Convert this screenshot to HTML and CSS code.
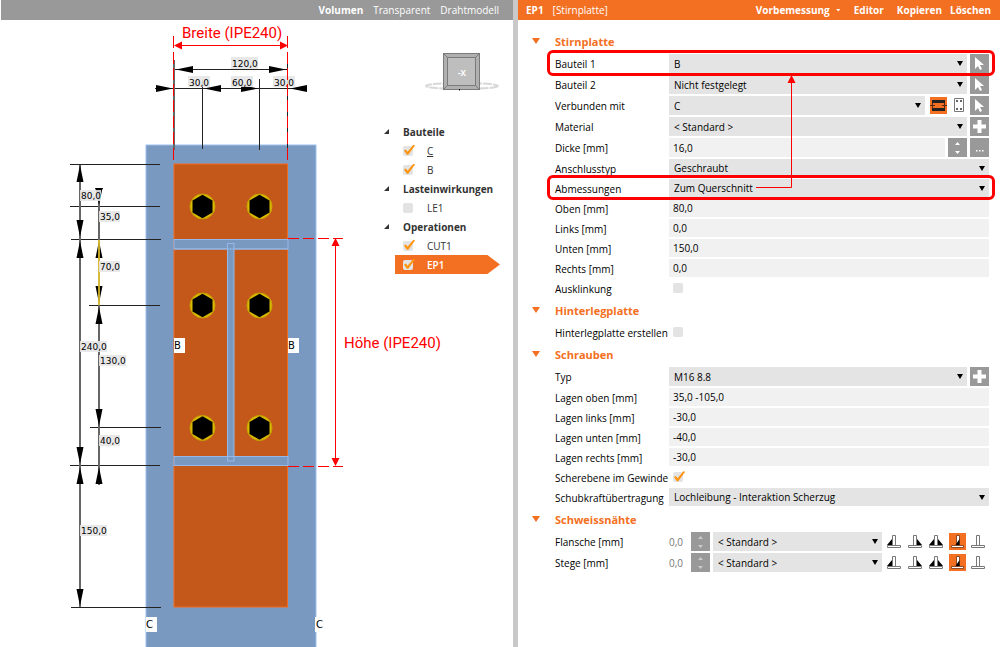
FILE: index.html
```html
<!DOCTYPE html>
<html lang="de">
<head>
<meta charset="utf-8">
<title>Stirnplatte</title>
<link rel="stylesheet" href="styles.css">
</head>
<body>
<svg class="defs" aria-hidden="true">
  <defs>
    <symbol id="cursor" viewBox="0 0 19 19"><path fill="#fff" d="M5 3v12l3-3 2 4 2-1-2-4h4z"/></symbol>
    <symbol id="plus" viewBox="0 0 19 19"><path fill="#fff" d="M7.500 3h4v4.500H16v4h-4.500V16h-4v-4.500H3v-4h4.500z"/></symbol>
    <symbol id="spin" viewBox="0 0 19 19"><path fill="currentColor" d="M7 7l2.500-3L12 7zM7 13l2.500 3L12 13z"/></symbol>
    <symbol id="dots" viewBox="0 0 19 19"><path fill="#fff" d="M6 12h1.500v1.500H6zM9 12h1.500v1.500H9zM12 12h1.500v1.500H12z"/></symbol>
    <symbol id="tee" viewBox="0 0 17 17"><path fill="#fff" stroke="#777" d="M1.500 12.500h13v2h-13zM6.500 2.500h3v10h-3z"/></symbol>
    <symbol id="weld-left" viewBox="0 0 17 17"><use href="#tee"/><path d="M6 6v6H1z"/></symbol>
    <symbol id="weld-right" viewBox="0 0 17 17"><use href="#tee"/><path d="M10 6v6h5z"/></symbol>
    <symbol id="weld-both" viewBox="0 0 17 17"><use href="#tee"/><path d="M6 6v6H1zM10 6v6h5z"/></symbol>
    <symbol id="weld-butt" viewBox="0 0 17 17"><path fill="#fff" stroke="#8a4a25" d="M2.500 12.500h12v2h-12zM7.500 2.500h3v10h-3z"/><path d="M10.500 6v6H6.500z"/></symbol>
    <g id="bolt"><circle r="12.500" fill="#dcb800" stroke="#c4a200"/><path d="M0-11.800 10-6v12L0 11.800-10 6v-12z"/></g>
    <path id="up" d="M0 0 3.500 17h-7z"/>
    <path id="down" d="M0 0 3.500-17h-7z"/>
    <path id="left" d="M0 0 17-3.500v7z"/>
    <path id="right" d="M0 0-17-3.500v7z"/>
  </defs>
</svg>
<div class="app">
  <section class="viewer">
    <header class="bar bar-view">
      <button class="active">Volumen</button>
      <button>Transparent</button>
      <button>Drahtmodell</button>
    </header>
    <div class="scene">
      <svg class="drawing" viewBox="0 20 513 627" preserveAspectRatio="xMinYMin slice">
        <rect x="146" y="145" width="170" height="520" fill="#7a99c1" stroke="#9cc0ee"/>
        <rect x="174" y="164" width="113.500" height="443" fill="#c4581b" stroke="#f26a1f"/>
        <g fill="#7a99c1" stroke="#94b8ea">
          <rect x="174" y="239.500" width="114" height="9.500"/>
          <rect x="174" y="456.500" width="114" height="9"/>
          <rect x="227.500" y="243.500" width="6.500" height="217.500"/>
        </g>
        <path stroke="#94b8ea" d="M174 249h114M174 456.500h114"/>
        <use href="#bolt" x="202.500" y="206.500"/><use href="#bolt" x="259.500" y="206.500"/>
        <use href="#bolt" x="202.500" y="305.500"/><use href="#bolt" x="259.500" y="305.500"/>
        <use href="#bolt" x="202.500" y="428" /><use href="#bolt" x="259.500" y="428"/>
        <g class="dim-lines">
          <path d="M70 164.500h90M70 206.500h90M71 239.500h90M89 305.500h71M90 427.500h71M70 465.500h90M71 607.500h90"/>
          <path d="M174 69.500h114M155 88.500h152M202.500 80v69M259.500 79v71M287.500 60v90"/>
          <path class="soft" d="M80 165v442M99 189v296M174 60v90"/>
        </g>
        <use href="#left" x="176" y="69.500"/><use href="#right" x="286" y="69.500"/>
        <use href="#right" x="173" y="88.500"/><use href="#left" x="204" y="88.500"/><use href="#right" x="258" y="88.500"/><use href="#left" x="290" y="88.500"/>
        <use href="#up" x="80" y="165"/><use href="#down" x="80" y="237"/><use href="#up" x="80" y="241"/><use href="#down" x="80" y="464"/><use href="#up" x="80" y="467"/><use href="#down" x="80" y="606"/>
        <use href="#down" x="99" y="205"/><use href="#up" x="99" y="241"/><use href="#down" x="99" y="303"/><use href="#up" x="99" y="307"/><use href="#down" x="99" y="426"/><use href="#up" x="99" y="467"/>
        <path stroke="#ffd92e" stroke-width="1.500" d="M99 240v65"/>
        <g class="dim-box">
          <path d="M231 57h27v12h-27zM188 76h22v11h-22zM231 76h22v11h-22zM273 76h22v11h-22zM80 190h21v11h-21zM99 211h21v11h-21zM99 261h21v11h-21zM80 341h27v11h-27zM99 355h27v11h-27zM99 435h21v11h-21zM80 525h27v11h-27z"/>
        </g>
        <path d="M95 188h8l-1 2h-6z"/>
        <g class="dim-text">
          <text x="232" y="67">120,0</text><text x="189" y="86">30,0</text><text x="232" y="86">60,0</text><text x="274" y="86">30,0</text>
          <text x="81" y="199">80,0</text><text x="100" y="220">35,0</text><text x="100" y="270">70,0</text><text x="81" y="350">240,0</text><text x="100" y="364">130,0</text><text x="100" y="444">40,0</text><text x="81" y="534">150,0</text>
        </g>
        <path fill="#fff" d="M174 338h11v15h-11zM288 338h11v15h-11zM146 617h11v15h-11zM315 617h11v15h-11z"/>
        <g class="tag-text"><text x="174" y="349">B</text><text x="288" y="349">B</text><text x="146" y="628">C</text><text x="316" y="628">C</text></g>
        <g fill="none" stroke="#f00">
          <path stroke-dasharray="12 4" d="M173.500 36v128M287.500 36v128"/>
          <path stroke-dasharray="11 4" d="M288 238.500h55M288 466.500h55"/>
          <path d="M175 45.500h112M335.500 240v225"/>
        </g>
        <path fill="#f00" d="M174 45.500l8-4v8zM288 45.500l-8-4v8zM335.500 238l4 8h-8zM335.500 466l4-8h-8z"/>
        <g class="note-text"><text x="182" y="38">Breite (IPE240)</text><text x="344" y="348">Höhe (IPE240)</text></g>
      </svg>
      <aside class="side">
        <svg class="cube" width="76" height="42" viewBox="0 0 76 42">
          <ellipse cx="38" cy="34" rx="36" ry="3" fill="none" stroke="#d8d8d8" stroke-width="2" stroke-dasharray="9 1"/>
          <rect x="19.500" y="1.500" width="36" height="36" fill="#b0b0b0" stroke="#7a7a7a"/>
          <path stroke="#7a7a7a" fill="none" d="M19.500 1.500l36 36M55.500 1.500l-36 36"/>
          <rect x="23.500" y="5.500" width="28" height="28" fill="#bebebe" stroke="#7a7a7a"/>
          <path d="M35 37h1v1.500h-1z"/>
          <text x="34" y="24">-X</text>
        </svg>
        <div class="tree">
          <h2>Bauteile</h2>
          <label><input type="checkbox" checked><span class="current">C</span></label>
          <label><input type="checkbox" checked><span>B</span></label>
          <h2>Lasteinwirkungen</h2>
          <label><input type="checkbox"><span>LE1</span></label>
          <h2>Operationen</h2>
          <label><input type="checkbox" checked><span>CUT1</span></label>
          <label class="selected"><input type="checkbox" checked><span>EP1</span></label>
        </div>
      </aside>
    </div>
  </section>
  <div class="splitter"></div>
  <section class="panel">
    <header class="bar bar-props">
      <b>EP1</b><span class="kind">[Stirnplatte]</span>
      <button class="menu">Vorbemessung</button>
      <button>Editor</button>
      <button>Kopieren</button>
      <button>Löschen</button>
    </header>
    <form class="props">
      <h2>Stirnplatte</h2>
      <div class="row tall marked"><label for="b1">Bauteil 1</label><span class="select"><select id="b1"><option>B</option></select></span><button type="button" class="tool" aria-label="Auswählen"><svg><use href="#cursor"/></svg></button></div>
      <div class="row tall"><label for="b2">Bauteil 2</label><span class="select"><select id="b2"><option>Nicht festgelegt</option></select></span><button type="button" class="tool" aria-label="Auswählen"><svg><use href="#cursor"/></svg></button></div>
      <div class="row tall"><label for="vm">Verbunden mit</label><span class="select"><select id="vm"><option>C</option></select></span>
        <div class="choices sides">
          <button type="button" class="choice on" aria-label="Flansch"><svg viewBox="0 0 17 17"><path fill="#222" d="M2 3h13v3H2zM2 11h13v3H2z"/><path fill="none" stroke="#5a2a10" d="M2.500 6v5M14.500 6v5M0 8.500h5M12 8.500h5"/></svg></button>
          <button type="button" class="choice" aria-label="Umfang"><svg viewBox="0 0 17 17"><path fill="none" stroke="#777" d="M4.500 1.500h9v13h-9z"/><path d="M6 3h2v2H6zM10 3h2v2h-2zM6 11h2v2H6zM10 11h2v2h-2z" fill="#666"/></svg></button>
        </div>
        <button type="button" class="tool" aria-label="Auswählen"><svg><use href="#cursor"/></svg></button></div>
      <div class="row tall"><label for="mat">Material</label><span class="select"><select id="mat"><option>&lt; Standard &gt;</option></select></span><button type="button" class="tool" aria-label="Neu"><svg><use href="#plus"/></svg></button></div>
      <div class="row tall"><label for="di">Dicke [mm]</label><input class="text" id="di" value="16,0"><button type="button" class="tool" aria-label="Ändern"><svg><use href="#spin"/></svg></button><button type="button" class="tool" aria-label="Mehr"><svg><use href="#dots"/></svg></button></div>
      <div class="row"><label for="at">Anschlusstyp</label><span class="select"><select id="at"><option>Geschraubt</option></select></span></div>
      <div class="row marked"><label for="ab">Abmessungen</label><span class="select"><select id="ab"><option>Zum Querschnitt</option></select></span>
        <svg class="link-arrow" width="42" height="115" viewBox="0 0 42 115"><path fill="none" stroke="#f00" d="M0 112.500h35.500V6"/><path fill="#f00" d="M35.500 0l4 8h-8z"/></svg></div>
      <div class="row"><label for="ob">Oben [mm]</label><input class="text" id="ob" value="80,0"></div>
      <div class="row"><label for="li">Links [mm]</label><input class="text" id="li" value="0,0"></div>
      <div class="row"><label for="un">Unten [mm]</label><input class="text" id="un" value="150,0"></div>
      <div class="row"><label for="re">Rechts [mm]</label><input class="text" id="re" value="0,0"></div>
      <div class="row"><label for="au">Ausklinkung</label><input type="checkbox" id="au"></div>
      <h2>Hinterlegplatte</h2>
      <div class="row"><label for="he">Hinterlegplatte erstellen</label><input type="checkbox" id="he"></div>
      <h2>Schrauben</h2>
      <div class="row tall"><label for="ty">Typ</label><span class="select"><select id="ty"><option>M16 8.8</option></select></span><button type="button" class="tool" aria-label="Neu"><svg><use href="#plus"/></svg></button></div>
      <div class="row"><label for="lo">Lagen oben [mm]</label><input class="text" id="lo" value="35,0 -105,0"></div>
      <div class="row"><label for="ll">Lagen links [mm]</label><input class="text" id="ll" value="-30,0"></div>
      <div class="row"><label for="lu">Lagen unten [mm]</label><input class="text" id="lu" value="-40,0"></div>
      <div class="row"><label for="lr">Lagen rechts [mm]</label><input class="text" id="lr" value="-30,0"></div>
      <div class="row"><label for="sg">Scherebene im Gewinde</label><input type="checkbox" id="sg" checked></div>
      <div class="row"><label for="sk">Schubkraftübertragung</label><span class="select"><select id="sk"><option>Lochleibung - Interaktion Scherzug</option></select></span></div>
      <h2>Schweissnähte</h2>
      <div class="row tall"><label for="fl">Flansche [mm]</label><input class="amount" id="fl" value="0,0" disabled><button type="button" class="tool dim" aria-label="Ändern"><svg><use href="#spin"/></svg></button><span class="select"><select aria-label="Material Flansche"><option>&lt; Standard &gt;</option></select></span>
        <div class="choices welds">
          <button type="button" class="choice" aria-label="Naht links"><svg><use href="#weld-left"/></svg></button>
          <button type="button" class="choice" aria-label="Naht rechts"><svg><use href="#weld-right"/></svg></button>
          <button type="button" class="choice" aria-label="Naht beidseitig"><svg><use href="#weld-both"/></svg></button>
          <button type="button" class="choice on" aria-label="Stumpfnaht"><svg><use href="#weld-butt"/></svg></button>
          <button type="button" class="choice" aria-label="Keine Naht"><svg><use href="#tee"/></svg></button>
        </div></div>
      <div class="row tall"><label for="st">Stege [mm]</label><input class="amount" id="st" value="0,0" disabled><button type="button" class="tool dim" aria-label="Ändern"><svg><use href="#spin"/></svg></button><span class="select"><select aria-label="Material Stege"><option>&lt; Standard &gt;</option></select></span>
        <div class="choices welds">
          <button type="button" class="choice" aria-label="Naht links"><svg><use href="#weld-left"/></svg></button>
          <button type="button" class="choice" aria-label="Naht rechts"><svg><use href="#weld-right"/></svg></button>
          <button type="button" class="choice" aria-label="Naht beidseitig"><svg><use href="#weld-both"/></svg></button>
          <button type="button" class="choice on" aria-label="Stumpfnaht"><svg><use href="#weld-butt"/></svg></button>
          <button type="button" class="choice" aria-label="Keine Naht"><svg><use href="#tee"/></svg></button>
        </div></div>
    </form>
  </section>
</div>
</body>
</html>
```

FILE: styles.css
```css
* { box-sizing: border-box; }
body { margin: 0; background: #fff; color: #000; font-family: "Open Sans", "Noto Sans", sans-serif; font-size: 10px; }
button, input, select { font: inherit; color: inherit; border: 0; padding: 0; margin: 0; background: none; border-radius: 0; }
h2 { margin: 0; font-size: 11px; font-weight: 700; }
.defs { position: absolute; width: 0; height: 0; }
.app { display: grid; grid-template-columns: 513fr 5px 482fr; min-height: 100vh; }
.viewer { display: flex; flex-direction: column; min-width: 0; padding-left: 1px; }
.splitter { background: #c9c9c9; }
.panel { min-width: 0; }

.bar { display: flex; align-items: center; height: 20px; color: #fff; }
.bar button { color: #fff; font-weight: 700; }
.bar-view { justify-content: flex-end; gap: 10px; padding-right: 14px; background: #999; }
.bar-view button { font-weight: 400; }
.bar-view .active { font-weight: 700; }
.bar-props { gap: 13px; padding: 0 9px 0 8px; background: #f36f21; }
.bar-props b { margin-right: -4px; }
.bar-props .kind { margin-right: auto; }
.bar-props button:last-child { margin-left: -5px; }
.menu { display: flex; align-items: center; gap: 6px; }
.menu::after { content: ""; width: 5px; height: 3px; background: #fff; clip-path: polygon(0 0, 100% 0, 50% 100%); }

.scene { flex: 1; display: grid; grid-template-columns: 1fr 130px; overflow: hidden; }
.drawing { grid-area: 1 / 1 / 2 / 3; width: 513px; height: 627px; margin-left: -1px; }
.side { grid-area: 1 / 2; padding-top: 32px; }
.cube { display: block; margin-left: 41px; }
.cube text { fill: #fff; font-size: 8px; font-weight: 700; }
.dim-lines { fill: none; stroke: #222; }
.dim-lines .soft { stroke: #666; stroke-width: 2px; }
.dim-box { fill: #e6e6e6; fill-opacity: 0.9; }
.dim-text { font-family: "DejaVu Sans", sans-serif; font-size: 9px; }
.tag-text { font-family: "DejaVu Sans", sans-serif; font-size: 10px; }
.note-text { font-family: Roboto, sans-serif; font-size: 15px; fill: #f00; }

.tree { margin-top: 28px; padding-left: 1px; color: #333; }
.tree h2 { display: flex; align-items: center; gap: 14px; height: 19px; font-size: 10px; }
.tree h2::before { content: ""; width: 5px; height: 5px; background: #333; clip-path: polygon(100% 0, 100% 100%, 0 100%); }
.tree label { display: flex; align-items: center; gap: 14px; height: 19px; margin-left: 11px; padding-left: 8px; }
.tree .current { text-decoration: underline; }
.tree .selected { width: 105px; color: #fff; font-weight: 600; background: #f36f21; clip-path: polygon(0 0, 88% 0, 100% 50%, 88% 100%, 0 100%); }

input[type="checkbox"] { appearance: none; flex: none; width: 10px; height: 10px; border-radius: 2px; background: #e3e3e3; }
input[type="checkbox"]:checked::after { content: ""; display: block; width: 12px; height: 11px; margin-top: -1px; background: #ff9410; clip-path: polygon(8% 55%, 24% 46%, 38% 66%, 88% 0, 100% 8%, 44% 94%, 32% 94%); }

.props { padding: 9px 11px 20px 14px; }
.props h2 { display: flex; align-items: center; gap: 15px; height: 24px; color: #f36f21; }
.props h2::before { content: ""; width: 8px; height: 6px; background: #f36f21; clip-path: polygon(0 0, 100% 0, 50% 100%); }
.row { position: relative; display: flex; align-items: center; gap: 3px; height: 20px; margin-left: 23px; }
.row.tall { height: 21px; }
.row > label { flex: none; width: 111px; padding-top: 1px; white-space: nowrap; }
.row > input[type="checkbox"] { margin-left: 4px; }
.select { position: relative; flex: 1; min-width: 0; height: 18px; }
.tall .select { height: 19px; }
.select select { appearance: none; display: block; width: 100%; height: 100%; padding: 0 18px 0 5px; background: #e4e4e4; }
.select::after { content: ""; position: absolute; right: 4px; top: 7px; width: 6px; height: 5px; background: #000; clip-path: polygon(0 0, 100% 0, 50% 100%); pointer-events: none; }
.text { flex: 1; min-width: 0; height: 18px; padding: 0 4px; background: #f1f1f1; }
.tall .text { height: 19px; }
.tool { flex: none; width: 19px; height: 19px; background: #999; color: #fff; }
.tool.dim { color: #ccc; }
.tool svg { display: block; width: 19px; height: 19px; }
.amount { flex: none; width: 19px; color: #777; }
.choices { display: flex; gap: 4px; }
.choices.sides { gap: 3px; padding-left: 2px; }
.choices.welds { padding: 0 2px 0 1px; }
.choice { width: 17px; height: 17px; }
.choice.on { background: #f36f21; }
.choice svg { display: block; width: 17px; height: 17px; }

.marked::after { content: ""; position: absolute; inset: -3px -6px -2px -8px; border: 3px solid #f00; border-radius: 6px; pointer-events: none; z-index: 1; }
.link-arrow { position: absolute; left: 201px; bottom: 8px; z-index: 2; pointer-events: none; }
```
